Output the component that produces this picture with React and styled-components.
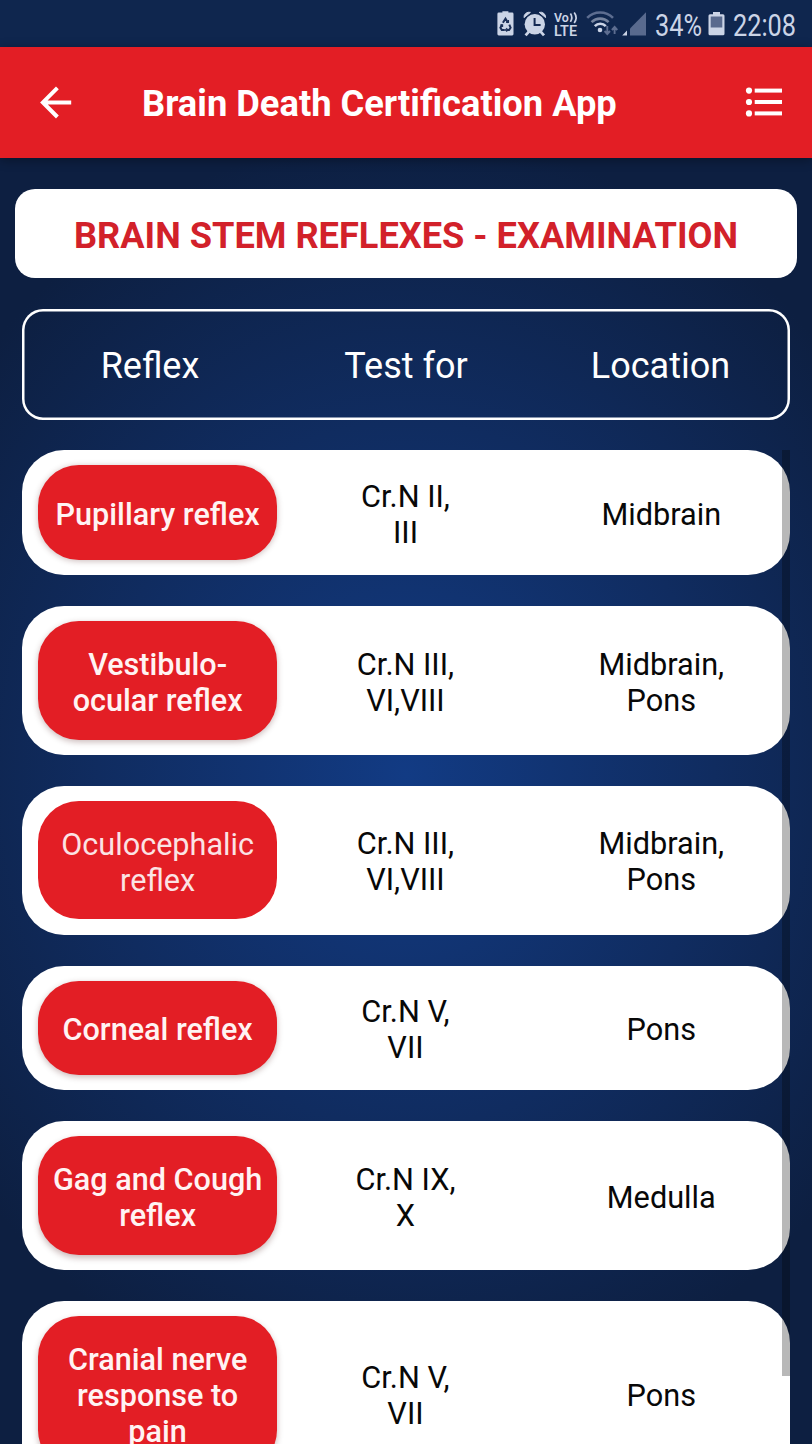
import styled, { createGlobalStyle } from "styled-components";

const reflexes = [
  { name: "Pupillary reflex", test: ["Cr.N II,", "III"], location: ["Midbrain"], lift: 1 },
  { name: "Vestibulo-ocular reflex", lines: ["Vestibulo-", "ocular reflex"], test: ["Cr.N III,", "VI,VIII"], location: ["Midbrain,", "Pons"], lift: 2 },
  { name: "Oculocephalic reflex", lines: ["Oculocephalic", "reflex"], test: ["Cr.N III,", "VI,VIII"], location: ["Midbrain,", "Pons"], flat: true },
  { name: "Corneal reflex", test: ["Cr.N V,", "VII"], location: ["Pons"], lift: 2 },
  { name: "Gag and Cough reflex", lines: ["Gag and Cough", "reflex"], test: ["Cr.N IX,", "X"], location: ["Medulla"], lift: 3 },
  { name: "Cranial nerve response to pain", lines: ["Cranial nerve", "response to", "pain"], test: ["Cr.N V,", "VII"], location: ["Pons"], lift: 3 },
];

const Lines = ({ items }) => items.map((line) => <Line key={line}>{line}</Line>);

const StatusIcons = () => (
  <svg width="160" height="47" viewBox="0 0 160 47" fill="#cbd4e6">
    {/* power saving battery */}
    <g transform="translate(-.4 .4)">
      <path d="M3.2 12.2h3.6v-1.4h6v1.4h3.8q1.3 0 1.3 1.3v20.2q0 1.3-1.3 1.3H3.2q-1.4 0-1.4-1.3V13.5q0-1.3 1.4-1.3z" />
      <g fill="none" stroke="#1b2f57" strokeWidth="2">
        <path d="M7.3 22.3l2.6-4 2.5 4M6.4 24.2l-1.6 3.1 1.4 2.2h3M13.7 24.2l1.3 3.1-1.5 2.2h-2.6" />
        <path d="M10.5 21.9h2.3v-2.3M11.6 27.8l-1.7 1.7 1.7 1.5M4.8 24.6h2.1v2" strokeWidth="1.3" />
      </g>
    </g>
    {/* alarm */}
    <circle cx="38.8" cy="24.2" r="10.2" />
    <path d="M28 17.6a5 5 0 0 1 6.4-5.2zM49.6 17.6a5 5 0 0 0-6.4-5.2z" stroke="#cbd4e6" strokeWidth="1" />
    <path d="M29.6 35.4l3.6-4M48 35.4l-3.6-4" stroke="#cbd4e6" strokeWidth="2.8" />
    <path d="M38.6 18v7.1h6" fill="none" stroke="#152a53" strokeWidth="2" />
    {/* volte */}
    <text x="58" y="22.4" fontSize="13.5" fontWeight="600" textLength="14.8" lengthAdjust="spacingAndGlyphs">Vo</text>
    <path d="M74.4 13.5q2.8 4 0 8.4M78.2 12.4q3.8 5 0 10.6" fill="none" stroke="#cbd4e6" strokeWidth="1.7" />
    <text x="58" y="35.8" fontSize="15" fontWeight="600" textLength="23" lengthAdjust="spacingAndGlyphs">LTE</text>
    {/* wifi */}
    <g fill="none" strokeWidth="2.6">
      <path d="M91.2 17.8a18.2 18.2 0 0 1 25.8 0" stroke="#5d6d90" />
      <path d="M95.6 22.1a12.2 12.2 0 0 1 17 0" stroke="#76849f" />
      <path d="M98.8 26.1a7.6 7.6 0 0 1 11 0" stroke="#cbd4e6" />
    </g>
    <circle cx="104" cy="30" r="2.3" />
    <path d="M111.3 26v7.6M108.6 31l2.7 3 2.7-3M118.6 34v-7M115.9 30l2.7-3 2.7 3" fill="none" stroke="#5d6d90" strokeWidth="1.9" />
    {/* signal */}
    <path d="M131 35.5v-5l-4.8 5z" />
    <path d="M150 35.5V12.3L134 28.6v6.9z" fill="#596a8e" />
  </svg>
);

const BatteryIcon = () => (
  <svg width="17" height="24" viewBox="0 0 17 24">
    <path d="M2 2.2h3V0h7v2.2h3q1.5 0 1.5 1.5v18q0 1.6-1.5 1.6H2q-1.5 0-1.5-1.6v-18Q.5 2.2 2 2.2z" fill="#cbd4e6" />
    <path d="M2.7 4.5h11.6v11H2.7z" fill="#596a8e" />
  </svg>
);

const BackIcon = () => (
  <svg width="34" height="34" viewBox="0 0 34 34" fill="none" stroke="#fff" strokeWidth="4">
    <path d="M32.2 17.4H4M18.4 2.8L3.9 17.4l14.5 14.6" />
  </svg>
);

const ListIcon = () => (
  <svg width="38" height="32" viewBox="0 0 38 32" fill="#fff">
    {[4.6, 16, 27.4].map((y) => (
      <g key={y}>
        <circle cx="4" cy={y} r="3.1" />
        <path d={`M9.7 ${y - 2}H37v4H9.7z`} />
      </g>
    ))}
  </svg>
);

export default function App() {
  return (
    <>
      <GlobalStyle />
      <Screen>
        <StatusBar>
          <StatusIcons />
          <Percent>34%</Percent>
          <BatteryIcon />
          <Clock>22:08</Clock>
        </StatusBar>
        <AppBar>
          <BackIcon />
          <AppTitle>Brain Death Certification App</AppTitle>
          <ListIcon />
        </AppBar>
        <Heading>BRAIN STEM REFLEXES - EXAMINATION</Heading>
        <TableHead>
          <span>Reflex</span>
          <span>Test for</span>
          <span>Location</span>
        </TableHead>
        <List>
          {reflexes.map((item) => (
            <Row key={item.name}>
              <ReflexButton $flat={item.flat} $lift={item.lift}>
                <Lines items={item.lines || [item.name]} />
              </ReflexButton>
              <Cell>
                <Lines items={item.test} />
              </Cell>
              <Cell>
                <Lines items={item.location} />
              </Cell>
            </Row>
          ))}
          <ScrollThumb />
        </List>
      </Screen>
    </>
  );
}

const GlobalStyle = createGlobalStyle`
  * {
    box-sizing: border-box;
  }
  body {
    margin: 0;
    overflow: hidden;
    font-family: Roboto, sans-serif;
  }
`;

const Screen = styled.div`
  width: 812px;
  height: 1444px;
  overflow: hidden;
  display: flex;
  flex-direction: column;
  background: radial-gradient(ellipse 560px 640px at 406px 775px, #123b84 0%, #102c60 55%, #0d1f41 100%);
`;

const StatusBar = styled.div`
  flex: none;
  height: 47px;
  padding-right: 15px;
  display: flex;
  align-items: center;
  justify-content: flex-end;
  background: #0f264e;
`;

const StatusText = styled.span`
  margin-top: 3px;
  white-space: nowrap;
  font-size: 30.5px;
  line-height: 47px;
  color: #cbd4e6;
  transform: scaleX(0.83);
  transform-origin: left;
`;

const Percent = styled(StatusText)`
  width: 47px;
  margin-right: 6px;
  margin-left: -1px;
`;

const Clock = styled(StatusText)`
  width: 64px;
  margin-left: 8px;
`;

const AppBar = styled.header`
  flex: none;
  position: relative;
  height: 110.5px;
  padding: 0 29px 0 38.5px;
  display: flex;
  align-items: center;
  background: #e31e25;
  box-shadow: 0 2px 10px rgba(0, 0, 0, 0.35);
`;

const AppTitle = styled.h1`
  flex: 1;
  margin: 3px 0 0 69.5px;
  font-size: 36.3px;
  font-weight: 700;
  white-space: nowrap;
  color: #fff;
`;

const Heading = styled.h2`
  flex: none;
  height: 89.5px;
  margin: 31px 15px 0;
  display: flex;
  align-items: center;
  justify-content: center;
  padding-top: 4px;
  border-radius: 20px;
  background: #fff;
  color: #d2212a;
  font-size: 36.2px;
  font-weight: 700;
  white-space: nowrap;
`;

const TableHead = styled.div`
  flex: none;
  height: 111px;
  margin: 31px 22px 0;
  padding-top: 3px;
  display: grid;
  grid-template-columns: 256px 256px 253px;
  align-items: center;
  text-align: center;
  box-shadow: inset 0 0 0 2.5px #fff;
  border-radius: 21px;
  color: #fff;
  font-size: 36px;
`;

const List = styled.div`
  position: relative;
  flex: 1;
  min-height: 0;
  margin: 30.3px 22.4px 0;
  display: flex;
  flex-direction: column;
  gap: 31px;
`;

const Row = styled.div`
  flex: none;
  padding: 15.2px 0 15.2px 15.4px;
  display: grid;
  grid-template-columns: 239.7px 256px 255.6px;
  align-items: center;
  border-radius: 42px;
  background: #fff;
`;

const ReflexButton = styled.button`
  min-height: 94.3px;
  padding: 25.8px 0 20.6px;
  border: 0;
  border-radius: 41px;
  background: #e31e25;
  color: ${(props) => (props.$flat ? "#fbe3e4" : "#fff3f3")};
  font: ${(props) => (props.$flat ? 400 : 500)} 30.6px / 36px Roboto, sans-serif;
  box-shadow: ${(props) => (props.$flat ? "none" : `0 ${props.$lift}px 6px rgba(60, 0, 0, 0.28)`)};
`;

const Cell = styled.div`
  padding-top: 4.6px;
  font-size: 30.7px;
  line-height: 36px;
  text-align: center;
  color: #080808;
`;

const Line = styled.div`
  white-space: nowrap;
`;

const ScrollThumb = styled.div`
  position: absolute;
  top: 0;
  right: 0;
  width: 8px;
  height: 926px;
  background: rgba(0, 0, 0, 0.28);
`;
